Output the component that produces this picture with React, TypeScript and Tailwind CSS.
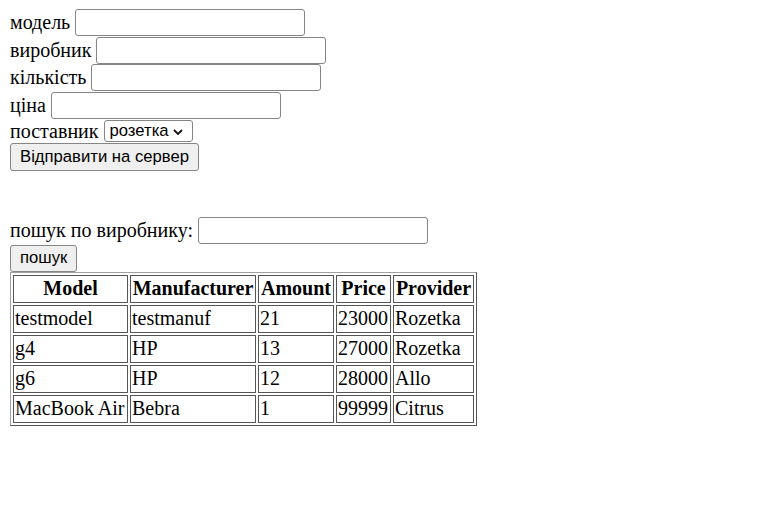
import React from "react";

const rows = [
  ["testmodel", "testmanuf", "21", "23000", "Rozetka"],
  ["g4", "HP", "13", "27000", "Rozetka"],
  ["g6", "HP", "12", "28000", "Allo"],
  ["MacBook Air", "Bebra", "1", "99999", "Citrus"],
];

const headers = [
  { label: "Model", w: "w-[115px]" },
  { label: "Manufacturer", w: "w-[126px]" },
  { label: "Amount", w: "w-[76px]" },
  { label: "Price", w: "w-[55px]" },
  { label: "Provider", w: "w-[81px]" },
];

const inputCls =
  "h-[27px] w-[230px] rounded-[3px] border border-[#858585] bg-white px-[2px] text-[16.67px] [font-family:'Liberation_Sans',Arial,sans-serif] outline-none";
const buttonCls =
  "rounded-[3px] border border-[#858585] bg-[#efefef] px-[9px] text-[16.67px] leading-none text-black [font-family:'Liberation_Sans',Arial,sans-serif]";

function Field({ label }: { label: string }) {
  return (
    <div className="flex h-[27.5px] items-center gap-[5px]">
      <span>{label}</span>
      <input type="text" className={inputCls} />
    </div>
  );
}

export default function App() {
  return (
    <div className="min-h-[520px] bg-white px-[10px] pt-[9px] text-[20px] leading-[23px] text-black [font-family:'Liberation_Serif','Times_New_Roman',serif]">
      <div className="flex flex-col items-start">
        <Field label="модель" />
        <Field label="виробник" />
        <Field label="кількість" />
        <Field label="ціна" />
        <div className="flex h-[24px] items-center gap-[5px]">
          <span>поставник</span>
          <div className="relative">
            <select
              defaultValue="rozetka"
              className="block h-[22px] w-[89px] appearance-none rounded-[3px] border border-[#858585] bg-white pl-[5px] pt-[1px] text-[16.67px] leading-none [font-family:'Liberation_Sans',Arial,sans-serif]"
            >
              <option value="rozetka">розетка</option>
              <option value="allo">алло</option>
              <option value="citrus">цитрус</option>
            </select>
            <svg
              viewBox="0 0 10 6"
              className="pointer-events-none absolute right-[10px] top-[9px] h-[6px] w-[10px]"
            >
              <path d="M1 1 L5 5 L9 1" fill="none" stroke="#111" strokeWidth="1.8" />
            </svg>
          </div>
        </div>
        <button className={`${buttonCls} h-[28px] w-[189px]`}>Відправити на сервер</button>
      </div>

      <div className="mt-[46px] flex flex-col items-start">
        <div className="flex h-[27.5px] items-center gap-[5px]">
          <span>пошук по виробнику:</span>
          <input type="text" className={inputCls} />
        </div>
        <button className={`${buttonCls} h-[27px] w-[67px]`}>пошук</button>
      </div>

      <table className="border-separate border-spacing-[2px] border border-t-[#a0a0a0] border-l-[#a0a0a0] border-r-[#555] border-b-[#555]">
        <thead>
          <tr>
            {headers.map((h) => (
              <th
                key={h.label}
                className={`${h.w} h-[28px] border border-[#555] p-[1px] text-center align-middle font-bold`}
              >
                {h.label}
              </th>
            ))}
          </tr>
        </thead>
        <tbody>
          {rows.map((r, i) => (
            <tr key={i}>
              {r.map((c, j) => (
                <td
                  key={j}
                  className="h-[28px] border border-[#555] p-[1px] text-left align-middle whitespace-nowrap"
                >
                  {c}
                </td>
              ))}
            </tr>
          ))}
        </tbody>
      </table>
    </div>
  );
}
